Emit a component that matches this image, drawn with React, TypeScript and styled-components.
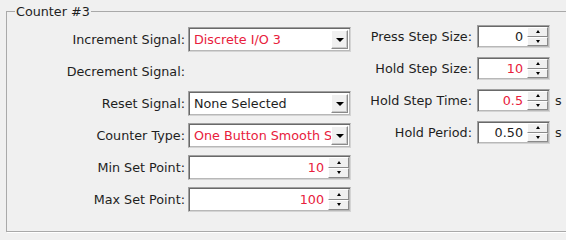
import React from "react";
import styled, { createGlobalStyle } from "styled-components";

const GlobalStyle = createGlobalStyle`
  html, body {
    margin: 0;
    padding: 0;
    background: #f0f0f0;
    overflow: hidden;
  }
  body {
    font-family: "DejaVu Sans", "Liberation Sans", sans-serif;
    font-size: 12.75px;
    color: #1e1e1e;
  }
`;

const Page = styled.div`
  padding: 4px 0 0 6px;
  width: 566px;
  height: 240px;
  box-sizing: border-box;
`;

const GroupBox = styled.fieldset`
  margin: 0;
  padding: 6px 0 19px 0;
  border: 1px solid #a9a9a9;
  width: 640px;
  min-width: 0;
  box-shadow: 1px 1px 0 #ffffff;
`;

const Legend = styled.legend`
  margin-left: 8px;
  padding: 0 1px;
  line-height: 15px;
  background: #f0f0f0;
`;

const Columns = styled.div`
  display: flex;
  align-items: flex-start;
`;

const LeftGrid = styled.div`
  display: grid;
  grid-template-columns: 178px 163px;
  grid-auto-rows: 25px;
  row-gap: 7px;
  column-gap: 3px;
  align-items: center;
  padding-top: 2px;
`;

const RightGrid = styled.div`
  display: grid;
  grid-template-columns: 107px 73px auto;
  grid-auto-rows: 23px;
  row-gap: 9px;
  column-gap: 5px;
  align-items: center;
  margin-left: 14px;
`;

const Label = styled.div`
  text-align: right;
  white-space: nowrap;
`;

const Unit = styled.div`
  white-space: nowrap;
`;

const Sunken = styled.div`
  box-sizing: border-box;
  height: 100%;
  display: flex;
  align-items: stretch;
  background: #ffffff;
  border: 1px solid;
  border-color: #a0a0a0 #d4d4d4 #d4d4d4 #a0a0a0;
  box-shadow: inset 1px 1px 0 #696969, inset -1px -1px 0 #b8b8b8;
  padding: 1px;
`;

const ValueText = styled.div<{ $red?: boolean; $align?: "left" | "right" }>`
  flex: 1;
  min-width: 0;
  overflow: hidden;
  white-space: nowrap;
  display: flex;
  align-items: center;
  justify-content: ${(p) => (p.$align === "right" ? "flex-end" : "flex-start")};
  padding: ${(p) => (p.$align === "right" ? "0 4px 0 0" : "0 0 0 4px")};
  color: ${(p) => (p.$red ? "#e8203c" : "#1e1e1e")};
`;

const ComboButton = styled.div`
  box-sizing: border-box;
  width: 17px;
  margin: 1px 1px 1px 0;
  background: #f0f0f0;
  border: 1px solid;
  border-color: #ffffff #8a8a8a #8a8a8a #ffffff;
  box-shadow: inset -1px -1px 0 #c8c8c8;
  display: flex;
  align-items: center;
  justify-content: center;
`;

const DownArrow = styled.span`
  width: 0;
  height: 0;
  border-left: 4px solid transparent;
  border-right: 4px solid transparent;
  border-top: 4px solid #000;
`;

const SpinButtons = styled.div`
  width: 21px;
  display: flex;
  flex-direction: column;
`;

const SpinBtn = styled.div`
  flex: 1;
  box-sizing: border-box;
  background: #f0f0f0;
  border: 1px solid;
  border-color: #ffffff #8a8a8a #8a8a8a #ffffff;
  display: flex;
  align-items: center;
  justify-content: center;
`;

const TinyArrow = styled.span<{ $up?: boolean }>`
  width: 0;
  height: 0;
  border-left: 2.5px solid transparent;
  border-right: 2.5px solid transparent;
  ${(p) =>
    p.$up ? "border-bottom: 3px solid #000;" : "border-top: 3px solid #000;"}
`;

const Combo = ({ value, red }: { value: string; red?: boolean }) => (
  <Sunken>
    <ValueText $red={red}>{value}</ValueText>
    <ComboButton>
      <DownArrow />
    </ComboButton>
  </Sunken>
);

const Spin = ({ value, red }: { value: string; red?: boolean }) => (
  <Sunken>
    <ValueText $red={red} $align="right">
      {value}
    </ValueText>
    <SpinButtons>
      <SpinBtn>
        <TinyArrow $up />
      </SpinBtn>
      <SpinBtn>
        <TinyArrow />
      </SpinBtn>
    </SpinButtons>
  </Sunken>
);

export default function App() {
  return (
    <>
      <GlobalStyle />
      <Page>
        <GroupBox>
          <Legend>Counter #3</Legend>
          <Columns>
            <LeftGrid>
              <Label>Increment Signal:</Label>
              <Combo value="Discrete I/O 3" red />
              <Label>Decrement Signal:</Label>
              <div />
              <Label>Reset Signal:</Label>
              <Combo value="None Selected" />
              <Label>Counter Type:</Label>
              <Combo value="One Button Smooth Step" red />
              <Label>Min Set Point:</Label>
              <Spin value="10" red />
              <Label>Max Set Point:</Label>
              <Spin value="100" red />
            </LeftGrid>
            <RightGrid>
              <Label>Press Step Size:</Label>
              <Spin value="0" />
              <Unit />
              <Label>Hold Step Size:</Label>
              <Spin value="10" red />
              <Unit />
              <Label>Hold Step Time:</Label>
              <Spin value="0.5" red />
              <Unit>s</Unit>
              <Label>Hold Period:</Label>
              <Spin value="0.50" />
              <Unit>s</Unit>
            </RightGrid>
          </Columns>
        </GroupBox>
      </Page>
    </>
  );
}
